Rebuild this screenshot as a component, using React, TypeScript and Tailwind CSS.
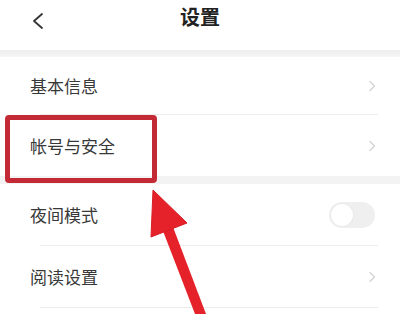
import React from "react";

const FONT = { fontFamily: '"Noto Sans CJK SC", "Noto Sans", sans-serif' };

function Chevron() {
  return (
    <svg width="8" height="12" viewBox="0 0 8 12" className="shrink-0">
      <path d="M2 1.5 L6.5 6 L2 10.5" fill="none" stroke="#d4d4d4" strokeWidth="1.4" strokeLinecap="round" strokeLinejoin="round" />
    </svg>
  );
}

function Row({ label, h, right }: { label: string; h: string; right?: React.ReactNode }) {
  return (
    <div className={`flex items-center justify-between pl-[30px] pr-[24px] ${h}`}>
      <span className="text-[17px] text-[#383838]">{label}</span>
      {right ?? <Chevron />}
    </div>
  );
}

function Divider() {
  return <div className="ml-[40px] mr-[22px] h-px bg-[#ececec]" />;
}

export default function App() {
  return (
    <div className="relative w-[400px] h-[314px] overflow-hidden bg-white" style={FONT}>
      {/* Header */}
      <div className="relative flex items-start justify-center pt-[3px] h-[50px]">
        <svg width="14" height="18" viewBox="0 0 14 18" className="absolute left-[31px] top-[12px]">
          <path d="M11 2 L3 9 L11 16" fill="none" stroke="#333" strokeWidth="1.8" strokeLinecap="round" strokeLinejoin="round" />
        </svg>
        <span className="text-[20px] leading-[28px] font-bold text-[#222]">设置</span>
      </div>
      <div className="h-[7px] bg-gradient-to-b from-[#ededed] to-[#f6f6f6]" />

      <Row label="基本信息" h="h-[57px]" />
      <Divider />
      <Row label="帐号与安全" h="h-[61px]" />
      <div className="h-[8px] bg-[#f3f3f3]" />
      <Row
        label="夜间模式"
        h="h-[61px]"
        right={
          <div className="relative w-[46px] h-[26px] rounded-full bg-[#efefef] mr-[1px]">
            <div className="absolute left-[2px] top-[2px] w-[22px] h-[22px] rounded-full bg-white shadow-[0_0_2px_rgba(0,0,0,0.08)]" />
          </div>
        }
      />
      <Divider />
      <Row label="阅读设置" h="h-[61px]" />
      <Divider />

      {/* Annotation overlays */}
      <div className="absolute left-[5px] top-[115px] w-[152px] h-[68px] rounded-[4px] border-[5px] border-[#c42a36]" />
      <svg width="400" height="314" viewBox="0 0 400 314" className="absolute left-0 top-0 pointer-events-none">
        <path d="M163 231 L173 227 L206 314 L195 314 Z" fill="#e5222a" />
        <path d="M153 190 L187 223 L151 237 Z" fill="#e5222a" stroke="#d81e26" strokeWidth="1" strokeLinejoin="round" />
      </svg>
    </div>
  );
}
